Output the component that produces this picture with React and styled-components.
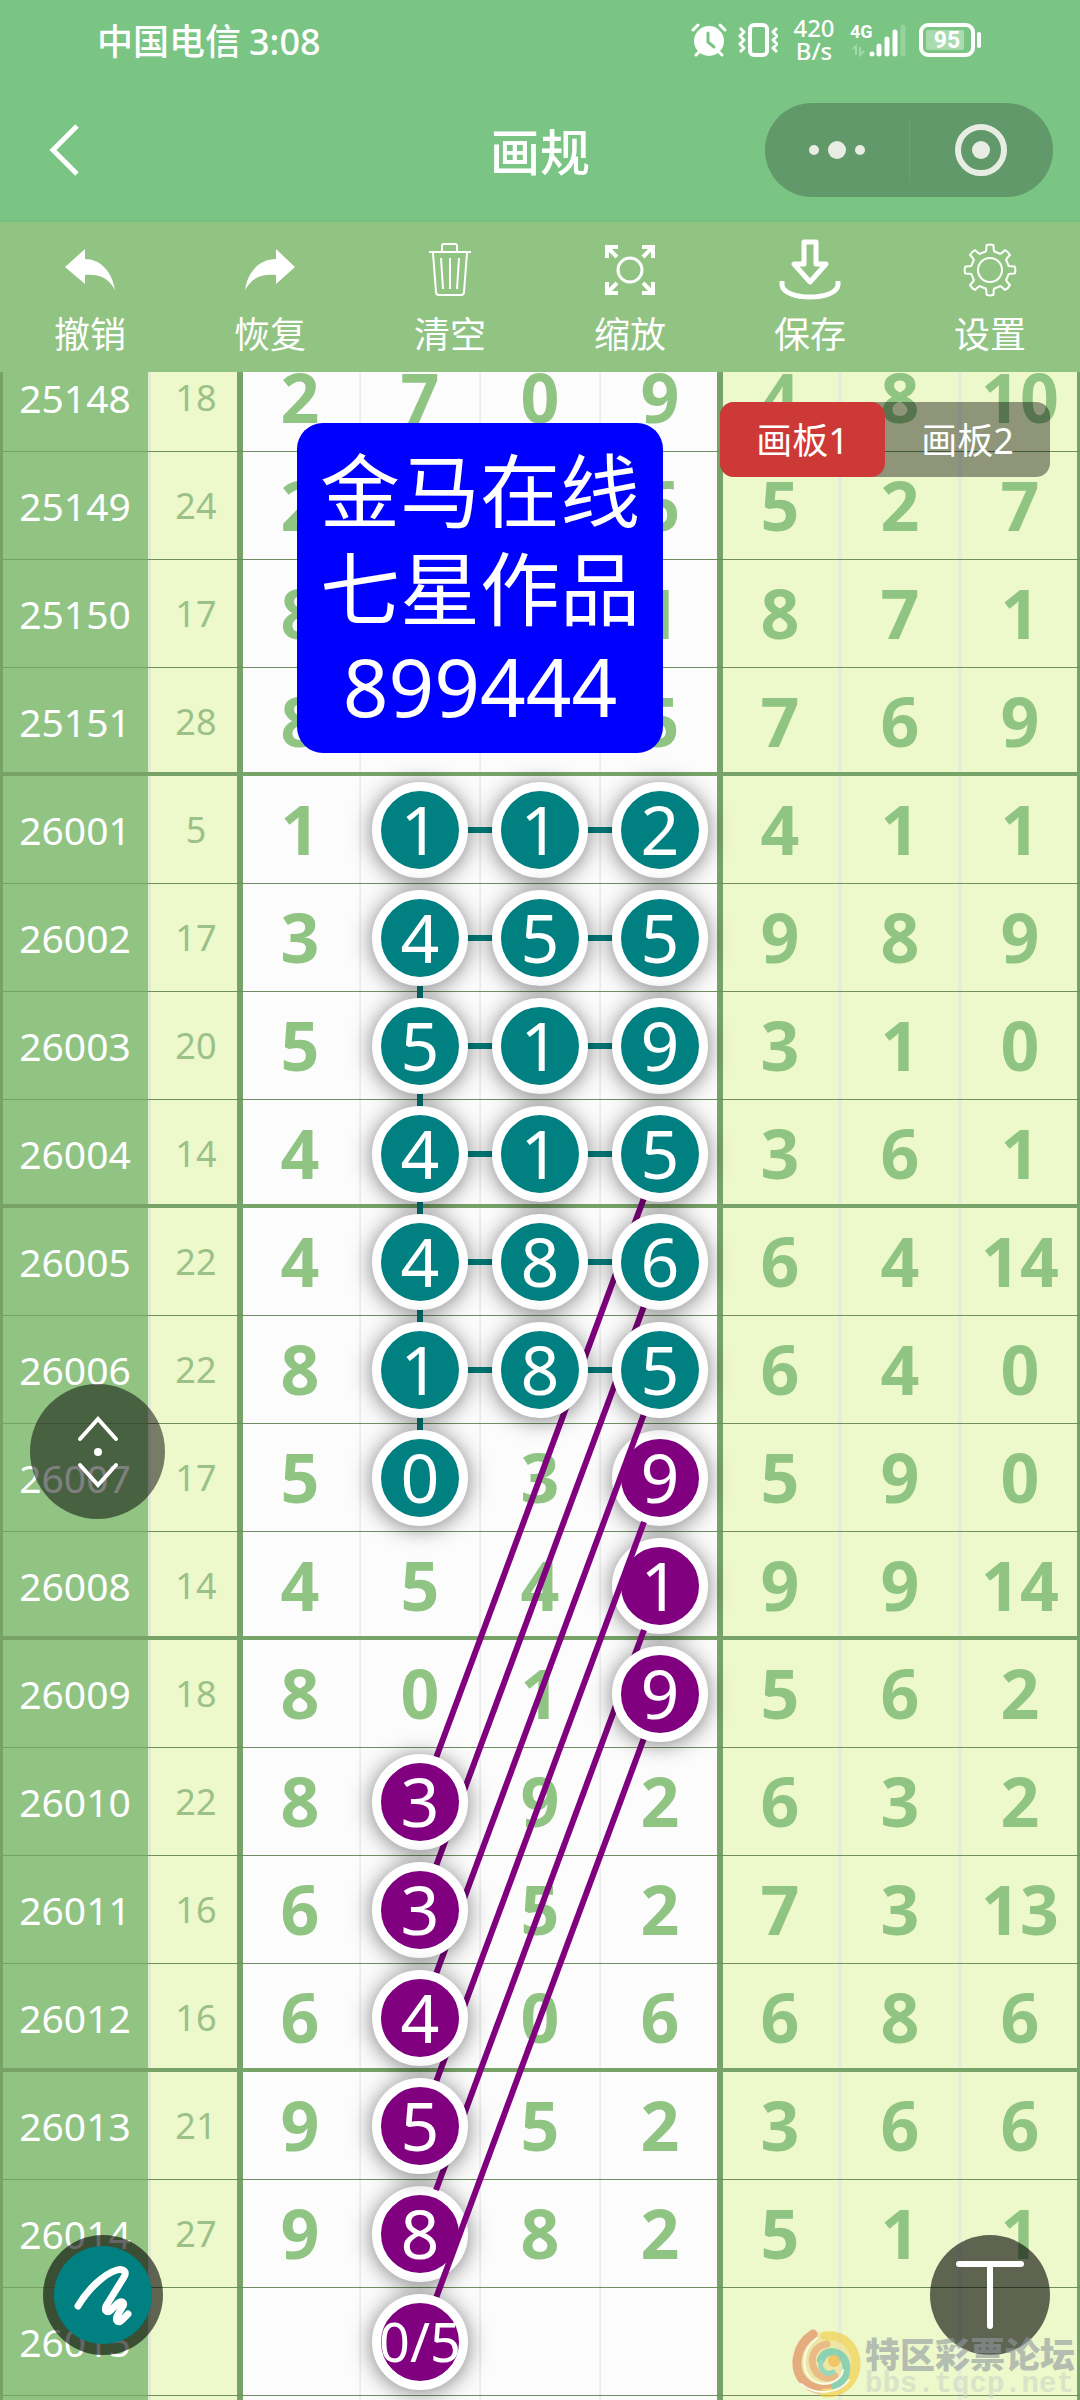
import React, {useState} from 'react';
import styled, {createGlobalStyle} from 'styled-components';

const GlobalStyle = createGlobalStyle`
    * {
        box-sizing: border-box;
    }
    body {
        margin: 0;
        background: #7ac484;
        font-family: "Noto Sans", "Noto Sans CJK SC", sans-serif;
        color: #fff;
    }
    button {
        padding: 0;
        border: none;
        background: none;
        color: inherit;
        font-family: inherit;
        cursor: pointer;
    }
`

const ROW = 108;

const Page = styled.div`
    display: flex;
    flex-direction: column;
    height: 100vh;
    overflow: hidden;
`
const StatusBar = styled.div`
    display: flex;
    align-items: center;
    justify-content: space-between;
    height: 80px;
    padding: 0 97px;
    font-weight: 500;
`
const Carrier = styled.div`
    display: flex;
    align-items: center;
    gap: 8px;
    padding-top: 4px;
    font-size: 36px;
    line-height: 44px;
`
const StatusIcons = styled.div`
    display: flex;
    align-items: center;
    gap: 11px;
    svg {
        display: block;
    }
`
const Speed = styled.div`
    width: 50px;
    padding-bottom: 2px;
    font-size: 24px;
    line-height: 23px;
    text-align: center;
`
const NavBar = styled.header`
    display: grid;
    grid-template-columns: 1fr auto 1fr;
    align-items: center;
    height: 142px;
    padding: 0 27px;
    border-bottom: 2px solid #78bf84;
`
const BackButton = styled.button`
    justify-self: start;
    width: 74px;
    height: 64px;
`
const Title = styled.h1`
    margin: 0;
    padding-top: 4px;
    font-size: 50px;
    font-weight: 500;
    line-height: 60px;
`
const Capsule = styled.div`
    justify-self: end;
    display: flex;
    align-items: center;
    width: 288px;
    height: 94px;
    border-radius: 47px;
    background: #62996a;
`
const CapsuleButton = styled.button`
    flex: 1;
    display: flex;
    align-items: center;
    justify-content: center;
    height: 62px;
    & + & {
        border-left: 1px solid #6ba273;
    }
`
const ToolBar = styled.nav`
    display: grid;
    grid-template-columns: repeat(6, 1fr);
    height: 150px;
    background: #91c383;
`
const ToolButton = styled.button`
    display: flex;
    flex-direction: column;
    align-items: center;
    font-size: 36px;
    line-height: 48px;
`
const ToolIcon = styled.svg`
    width: 64px;
    height: 64px;
    margin: 16px 0 9px;
`
const Board = styled.main`
    position: relative;
    flex: 1;
    min-height: 0;
    overflow: hidden;
    background: #fcfcfc;
`
const Sheet = styled.div`
    position: relative;
    margin-top: -28px;
`
const Table = styled.table`
    width: 100%;
    table-layout: fixed;
    border-spacing: 0;
`
const PeriodCol = styled.col`
    width: 13.7%;
`
const SumCol = styled.col`
    width: 8.52%;
`
const Cell = styled.td`
    height: ${ROW}px;
    padding: 0 0 2px;
    text-align: center;
    font-size: 68px;
    line-height: 80px;
    font-weight: 700;
    color: #8fc482;
    background: ${p => p.$tail ? '#edf9ca' : '#fcfcfc'};
    box-shadow:
        inset 0 ${p => p.$thick ? '-4px #77a368' : '-1px #6f8f5f'},
        inset ${p => p.$first ? '3px 0 #77a368' : p.$tail ? '2px 0 #e6eddb' : '1px 0 #ebebeb'},
        inset ${p => p.$last ? '-3px 0 #77a368' : p.$tail ? '-2px 0 #e6eddb' : '-1px 0 #f0f0f0'};
`
const Period = styled.th`
    height: ${ROW}px;
    padding: 0 0 0 2px;
    font-size: 39px;
    font-weight: 400;
    line-height: 56px;
    color: #fff;
    background: #91c383;
    box-shadow: inset 0 ${p => p.$thick ? '-4px' : '-1px'} #76a266, inset 3px 0 #76a266;
`
const Sum = styled(Cell)`
    padding: 0 0 0 4px;
    font-size: 36px;
    font-weight: 400;
    line-height: 56px;
    color: #9cc188;
    background: #edf9ca;
    box-shadow:
        inset 0 ${p => p.$thick ? '-4px #77a368' : '-1px #6f8f5f'},
        inset 3px 0 #e2ead2,
        inset -3px 0 #77a368;
`
const Ball = styled.span`
    position: relative;
    z-index: ${p => p.$below ? 1 : 3};
    display: flex;
    align-items: center;
    justify-content: center;
    width: 96px;
    height: 96px;
    margin: 0 auto -2px;
    padding-bottom: 2px;
    border: 9px solid #fff;
    border-radius: 50%;
    background: ${p => p.$color};
    box-shadow: 0 2px 22px rgba(0, 0, 0, .5);
    color: #fff;
    font-size: ${p => p.$small ? '54px' : '68px'};
    font-weight: 400;
    white-space: nowrap;
`
const Links = styled.svg`
    position: absolute;
    z-index: 2;
    top: 0;
    left: 0;
    width: 100%;
    pointer-events: none;
`
const Note = styled.div`
    position: absolute;
    z-index: 4;
    top: 51px;
    left: 27.5%;
    padding: 18px 23px;
    border-radius: 26px;
    background: #0000fe;
    font-size: 80px;
    line-height: 98px;
    text-align: center;
    white-space: pre-line;
`
const Tabs = styled.div`
    position: absolute;
    z-index: 4;
    top: 30px;
    right: 30px;
    display: flex;
    border-radius: 14px;
    background: rgba(0, 0, 0, .4);
`
const Tab = styled.button`
    width: 165px;
    height: 75px;
    padding-bottom: 3px;
    border-radius: 14px;
    background: ${p => p.$active ? '#cd3937' : 'transparent'};
    font-size: 36px;
`
const RoundButton = styled.button`
    position: absolute;
    z-index: 5;
    display: flex;
    align-items: center;
    justify-content: center;
    width: 120px;
    height: 120px;
    border-radius: 50%;
    background: rgba(0, 0, 0, .6);
`
const ScrollButton = styled(RoundButton)`
    left: 30px;
    bottom: 881px;
    width: 135px;
    height: 135px;
    background: rgba(0, 0, 0, .5);
`
const PenButton = styled(RoundButton)`
    left: 43px;
    bottom: 45px;
`
const TextButton = styled(RoundButton)`
    right: 30px;
    bottom: 45px;
`
const Watermark = styled.div`
    position: absolute;
    z-index: 6;
    right: 5px;
    bottom: 2px;
    display: flex;
    align-items: center;
    gap: 4px;
    opacity: .6;
    pointer-events: none;
`
const MarkLines = styled.div`
    padding-top: 10px;
`
const MarkText = styled.div`
    color: #8d98a0;
    font-size: 35px;
    font-weight: 900;
    line-height: 34px;
`
const MarkUrl = styled.div`
    color: #ccd6c8;
    font-family: "Liberation Mono", monospace;
    font-size: 29px;
    font-weight: 700;
    line-height: 26px;
`

const TEAL = 'teal';
const PURPLE = 'purple';

// period, sum, the four drawn digits, the three tail digits
const rows = [
    ['25148', 18, [2, 7, 0, 9], [4, 8, 10]],
    ['25149', 24, [2, '', '', 6], [5, 2, 7]],
    ['25150', 17, [8, '', '', 1], [8, 7, 1]],
    ['25151', 28, [8, '', '', 5], [7, 6, 9]],
    ['26001', 5, [1, 1, 1, 2], [4, 1, 1]],
    ['26002', 17, [3, 4, 5, 5], [9, 8, 9]],
    ['26003', 20, [5, 5, 1, 9], [3, 1, 0]],
    ['26004', 14, [4, 4, 1, 5], [3, 6, 1]],
    ['26005', 22, [4, 4, 8, 6], [6, 4, 14]],
    ['26006', 22, [8, 1, 8, 5], [6, 4, 0]],
    ['26007', 17, [5, 0, 3, 9], [5, 9, 0]],
    ['26008', 14, [4, 5, 4, 1], [9, 9, 14]],
    ['26009', 18, [8, 0, 1, 9], [5, 6, 2]],
    ['26010', 22, [8, 3, 9, 2], [6, 3, 2]],
    ['26011', 16, [6, 3, 5, 2], [7, 3, 13]],
    ['26012', 16, [6, 4, 0, 6], [6, 8, 6]],
    ['26013', 21, [9, 5, 5, 2], [3, 6, 6]],
    ['26014', 27, [9, 8, 8, 2], [5, 1, 1]],
    ['26015', '', ['', '0/5', '', ''], ['', '', '']],
    ['26016', '', ['', '', '', ''], ['', '', '']],
];

function getBall(row, col){
    if(row >= 4 && row <= 9 && col >= 1){
        return {color: TEAL};
    }
    if(row == 10 && col == 1){
        return {color: TEAL};
    }
    if(row >= 10 && row <= 12 && col == 3){
        return {color: PURPLE, below: row < 12};
    }
    if(row >= 13 && row <= 18 && col == 1){
        return {color: PURPLE, below: row == 17};
    }
    return null;
}

const rowY = (row) => row * ROW + ROW / 2;

function LinkLines(){
    const height = rows.length * ROW;
    const teal = [4, 5, 6, 7, 8, 9];
    const purple = [7, 8, 9, 10, 11, 12];
    return(
        <Links viewBox={`0 0 1080 ${height}`} height={height} preserveAspectRatio="none" aria-hidden="true">
            <g stroke={TEAL} strokeWidth="6">
                {teal.map(r => (
                    <path key={r} d={`M467 ${rowY(r)}H493M587 ${rowY(r)}H613`} />
                ))}
                {teal.slice(1).map(r => (
                    <path key={r} d={`M420 ${rowY(r) + 47}V${rowY(r) + 61}`} />
                ))}
            </g>
            <g stroke={PURPLE} strokeWidth="6">
                {purple.map(r => (
                    <line key={r} x1="644" y1={rowY(r) + 44} x2="436" y2={rowY(r + 6) - 44} />
                ))}
            </g>
        </Links>
    )
}

function gearPath(){
    const pt = (r, deg) => {
        const a = deg * Math.PI / 180;
        return `${(32 + r * Math.sin(a)).toFixed(2)} ${(32 - r * Math.cos(a)).toFixed(2)}`;
    }
    let d = '';
    for(let i = 0; i < 8; i++){
        const a = i * 45;
        d += `${i == 0 ? 'M' : 'L'}${pt(19, a - 13)}L${pt(21, a - 10)}L${pt(25, a - 8)}Q${pt(26, a)} ${pt(25, a + 8)}`;
        d += `L${pt(21, a + 10)}L${pt(19, a + 13)}Q${pt(19, a + 22)} ${pt(19, a + 32)}`;
    }
    return d + 'Z';
}

const icons = {
    undo: <path fill="#fff" d="M7 29 27 11V21C42 21 54 33 57 52 50 39 40 36 27 37V46Z" />,
    redo: <path fill="#fff" d="M57 29 38 11V21C22 21 10 33 7 52 14 39 24 36 38 37V46Z" />,
    clear: (
        <g fill="none" stroke="#fff" strokeWidth="2" strokeLinejoin="round">
            <path d="M11 14H53M24 13V8Q24 6 26 6H37Q39 6 39 8V13M15 15 18 54Q18 57 21 57H43Q46 57 46 54L49 15" />
            <path d="M23 20 25 51M32 20V51M41 20 39 51" />
        </g>
    ),
    zoom: (
        <g fill="none" stroke="#fff" strokeWidth="3">
            <circle cx="32" cy="32" r="12" />
            <path strokeWidth="4" d="M9 20V9H20M44 9H55V20M55 44V55H44M20 55H9V44M9 9 19 19M55 9 45 19M55 55 45 45M9 55 19 45" />
        </g>
    ),
    save: (
        <g fill="none" stroke="#fff" strokeWidth="5" strokeLinejoin="round">
            <path d="M26 4H38V26H48L32 44 16 26H26Z" />
            <path d="M4 43V47C5 55 18 59 32 59S59 55 60 47V43" />
        </g>
    ),
    settings: (
        <g fill="none" stroke="#fff" strokeWidth="2" strokeLinejoin="round">
            <path d={gearPath()} />
            <circle cx="32" cy="32" r="12" />
        </g>
    ),
};

const tools = [
    ['undo', '撤销'],
    ['redo', '恢复'],
    ['clear', '清空'],
    ['zoom', '缩放'],
    ['save', '保存'],
    ['settings', '设置'],
];

function Status(){
    return(
        <StatusBar>
            <Carrier>
                <span>中国电信</span>
                <span>3:08</span>
            </Carrier>
            <StatusIcons>
                <svg width="36" height="36" viewBox="0 0 36 36" fill="none" stroke="#fff" strokeWidth="3" strokeLinecap="round">
                    <circle cx="18" cy="19" r="15" fill="#fff" stroke="none" />
                    <path d="M2 8 7 3M34 8 29 3M5 33 9 29M31 33 27 29" />
                    <path stroke="#7ac484" d="M17 11V20L23 25" />
                </svg>
                <svg width="40" height="36" viewBox="0 0 40 36" fill="none" stroke="#fff" strokeWidth="3" strokeLinejoin="round">
                    <rect x="12" y="3" width="17" height="30" rx="4" strokeWidth="4" />
                    <path d="M2 6 6 10 2 14 6 18 2 22 6 26 2 30M39 6 35 10 39 14 35 18 39 22 35 26 39 30" />
                </svg>
                <Speed>420 B/s</Speed>
                <svg width="58" height="38" viewBox="0 0 58 38">
                    <text x="0" y="17" fill="#fff" fontSize="18" fontWeight="700" fontFamily="Roboto, sans-serif">4G</text>
                    <path stroke="#a3d9a8" strokeWidth="2" fill="none" d="M3 28 6 25V34M10 26V34L14 30" />
                    <g stroke="#fff" strokeWidth="5" strokeLinecap="round">
                        <path d="M22 33V33M29 25V33M37 18V33M45 11V33" />
                        <path stroke="#97d19e" d="M53 6V33" />
                    </g>
                </svg>
                <svg width="64" height="36" viewBox="0 0 64 36">
                    <rect x="2" y="3" width="52" height="30" rx="7" fill="none" stroke="#fff" strokeWidth="4" />
                    <rect x="7" y="8" width="38" height="20" rx="2" fill="#a9dbae" />
                    <path stroke="#fff" strokeWidth="4" strokeLinecap="round" d="M60 12V24" />
                    <text x="28" y="26" fill="#fff" fontSize="23" fontWeight="700" fontFamily="Roboto, sans-serif" textAnchor="middle">95</text>
                </svg>
            </StatusIcons>
        </StatusBar>
    )
}

function App(){
    const [board, setBoard] = useState(1);

    return(
    <>
        <GlobalStyle />
        <Page>
            <Status />
            <NavBar>
                <BackButton aria-label="返回">
                    <svg width="74" height="64" viewBox="0 0 74 64" fill="none" stroke="#fff" strokeWidth="5">
                        <path d="M50 8 26 32 50 56" />
                    </svg>
                </BackButton>
                <Title>画规</Title>
                <Capsule>
                    <CapsuleButton aria-label="更多">
                        <svg width="60" height="20" viewBox="0 0 60 20" fill="#e8ede4">
                            <circle cx="7" cy="10" r="5" />
                            <circle cx="30" cy="10" r="9" />
                            <circle cx="53" cy="10" r="5" />
                        </svg>
                    </CapsuleButton>
                    <CapsuleButton aria-label="关闭">
                        <svg width="54" height="54" viewBox="0 0 54 54">
                            <circle cx="27" cy="27" r="23" fill="none" stroke="#e8ede4" strokeWidth="6" />
                            <circle cx="27" cy="27" r="9" fill="#e8ede4" />
                        </svg>
                    </CapsuleButton>
                </Capsule>
            </NavBar>
            <ToolBar>
                {tools.map(([icon, label]) => (
                    <ToolButton key={icon}>
                        <ToolIcon viewBox="0 0 64 64">{icons[icon]}</ToolIcon>
                        {label}
                    </ToolButton>
                ))}
            </ToolBar>
            <Board>
                <Sheet>
                    <Table>
                        <colgroup>
                            <PeriodCol />
                            <SumCol />
                            <col span="7" />
                        </colgroup>
                        <tbody>
                            {rows.map(([period, sum, digits, tail], r) => {
                                const thick = r % 4 == 3;
                                return(
                                    <tr key={period}>
                                        <Period scope="row" $thick={thick}>{period}</Period>
                                        <Sum $thick={thick}>{sum}</Sum>
                                        {digits.map((n, c) => {
                                            const ball = getBall(r, c);
                                            return(
                                                <Cell key={c} $thick={thick} $first={c == 0} $last={c == 3}>
                                                    {ball ? (
                                                        <Ball $color={ball.color} $below={ball.below} $small={n == '0/5'}>{n}</Ball>
                                                    ) : n}
                                                </Cell>
                                            )
                                        })}
                                        {tail.map((n, c) => (
                                            <Cell key={c} $tail $thick={thick} $first={c == 0} $last={c == 2}>{n}</Cell>
                                        ))}
                                    </tr>
                                )
                            })}
                        </tbody>
                    </Table>
                    <LinkLines />
                </Sheet>
                <Note>{'金马在线\n七星作品\n899444'}</Note>
                <Tabs>
                    <Tab $active={board == 1} onClick={() => setBoard(1)}>画板1</Tab>
                    <Tab $active={board == 2} onClick={() => setBoard(2)}>画板2</Tab>
                </Tabs>
                <ScrollButton aria-label="滚动">
                    <svg width="48" height="76" viewBox="0 0 48 76" fill="none" stroke="#fff" strokeWidth="4" strokeLinecap="round">
                        <path d="M6 25 24 5 42 25M6 51 24 71 42 51" />
                        <circle cx="24" cy="38" r="4" fill="#fff" stroke="none" />
                    </svg>
                </ScrollButton>
                <PenButton aria-label="画笔">
                    <svg width="98" height="98" viewBox="0 0 98 98" fill="none">
                        <circle cx="49" cy="49" r="49" fill={TEAL} />
                        <path stroke="#fff" strokeWidth="7" strokeLinecap="round" strokeLinejoin="round" d="M24 60C34 43 50 28 63 24 70 22 73 26 70 31L52 60C50 66 54 67 57 64L64 57C68 54 71 57 69 60L63 70C61 76 65 77 68 74L74 68" />
                    </svg>
                </PenButton>
                <TextButton aria-label="文字">
                    <svg width="72" height="72" viewBox="0 0 72 72" stroke="#fff" strokeWidth="6" strokeLinecap="round">
                        <line x1="5" y1="5" x2="67" y2="5" />
                        <line x1="36" y1="5" x2="36" y2="67" />
                    </svg>
                </TextButton>
                <Watermark>
                    <svg width="70" height="70" viewBox="0 0 70 70" fill="none" strokeLinecap="round">
                        <circle cx="35" cy="36" r="32" fill="#f0dc8a" />
                        <path stroke="#e07a50" strokeWidth="9" d="M22 6C4 18 2 40 12 52 20 62 36 64 46 58" />
                        <path stroke="#f5c83a" strokeWidth="9" d="M34 8C52 6 65 18 65 36 65 52 52 66 34 65" />
                        <path stroke="#e8925c" strokeWidth="7" d="M36 16C22 18 18 32 24 42 28 50 38 52 44 48" />
                        <path stroke="#4fb8a0" strokeWidth="8" d="M30 32C34 20 52 22 55 36 57 48 50 56 44 58" />
                        <path stroke="#5fc3b4" strokeWidth="5" d="M30 34C28 42 36 48 42 44" />
                        <circle cx="43" cy="33" r="6" fill="#f5a623" />
                        <path stroke="#fff" strokeWidth="2" d="M26 10C10 22 10 44 22 52 34 60 50 54 52 42M10 56C24 68 48 66 58 52" />
                    </svg>
                    <MarkLines>
                        <MarkText>特区彩票论坛</MarkText>
                        <MarkUrl>bbs.tqcp.net</MarkUrl>
                    </MarkLines>
                </Watermark>
            </Board>
        </Page>
    </>
    )
}
export default App
